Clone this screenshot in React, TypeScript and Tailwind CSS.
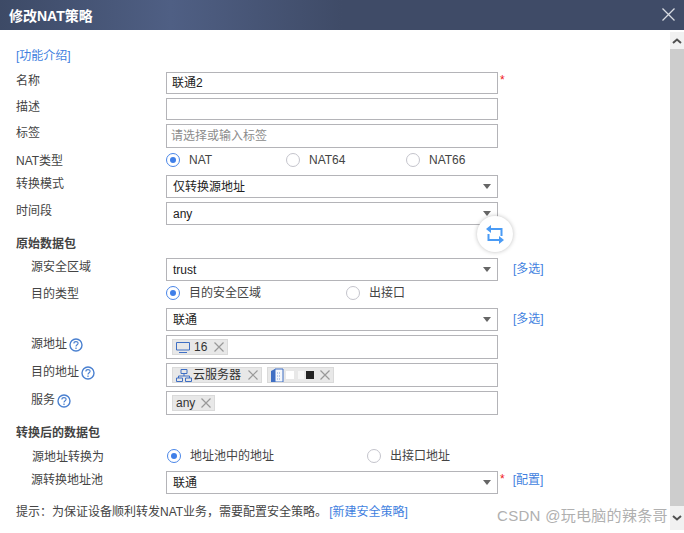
import type { ReactNode } from "react";

const box = "w-[332px] shrink-0 border border-[#b4b4b8] bg-white";

function Row({ label, className, children }: { label?: ReactNode; className: string; children?: ReactNode }) {
  return (
    <div className={`flex items-start ${className}`}>
      <div className="flex h-4 w-[150px] shrink-0 translate-y-px items-center text-[#444]">{label}</div>
      {children}
    </div>
  );
}

function Caret() {
  return <span className="absolute right-[6px] top-2 h-0 w-0 border-x-4 border-t-[5px] border-x-transparent border-t-[#666]" />;
}

function Select({ value }: { value: string }) {
  return (
    <div className={`relative flex h-full items-center pl-[6px] text-[#222] ${box}`}>
      {value}
      <Caret />
    </div>
  );
}

function Radio({ checked, text, className }: { checked?: boolean; text: string; className: string }) {
  return (
    <div className={`flex h-4 shrink-0 items-center ${className}`}>
      <span
        className={`flex h-[14px] w-[14px] shrink-0 items-center justify-center rounded-full border ${
          checked ? "border-[#4a86e8]" : "border-[#c4c4cc]"
        }`}
      >
        {checked && <span className="h-[6px] w-[6px] rounded-full bg-[#3f7fe8]" />}
      </span>
      <span className="ml-[9px] text-[#444]">{text}</span>
    </div>
  );
}

function Help() {
  return (
    <svg viewBox="0 0 14 14" className="ml-[2px] h-[14px] w-[14px] translate-y-px" fill="none" stroke="#4a80d0">
      <circle cx="7" cy="7" r="6" strokeWidth="1.4" />
      <path d="M4.9 5.4C4.9 3 9.1 3 9.1 5.3C9.1 6.8 7 6.8 7 8.6" strokeWidth="1.1" />
      <path d="M7 9.6V11" strokeWidth="1.2" />
    </svg>
  );
}

function Tag({ children, className }: { children: ReactNode; className: string }) {
  return (
    <div className={`flex h-4 shrink-0 items-center border border-[#dadada] bg-[#e8e8e8] text-[#333] ${className}`}>
      {children}
      <svg viewBox="0 0 10 10" className="absolute right-[3px] h-[10px] w-[10px]" fill="none" stroke="#999" strokeWidth="1.2">
        <path d="M0.5 0.5L9.5 9.5M9.5 0.5L0.5 9.5" />
      </svg>
    </div>
  );
}

function TagBox({ children }: { children: ReactNode }) {
  return <div className={`flex h-full items-center gap-[5px] pl-[5px] ${box}`}>{children}</div>;
}

function MultiLink({ text }: { text: string }) {
  return <a className="ml-[15px] flex h-full items-center pb-[2px] text-[#3f7fe0]">{text}</a>;
}

export default function App() {
  return (
    <div className="flex h-[533px] w-[684px] flex-col overflow-hidden bg-white text-[12px] font-['Liberation_Sans','Noto_Sans_CJK_SC',sans-serif] leading-4">
      <header className="flex h-[30px] shrink-0 items-center justify-between bg-[linear-gradient(90deg,#3d4a66_0%,#4f5f84_25%,#3f4b67_50%,#3f4b67_100%)] pl-[9px] pr-[9px]">
        <h1 className="translate-y-px text-[14px] font-bold text-white">修改NAT策略</h1>
        <svg viewBox="0 0 13 13" className="mb-[2px] h-[13px] w-[13px]" fill="none" stroke="#d8dbe2" strokeWidth="1.3">
          <path d="M0.5 0.5L12.5 12.5M12.5 0.5L0.5 12.5" />
        </svg>
      </header>

      <div className="flex min-h-0 flex-1">
        <main className="relative min-w-0 flex-1 pl-4 pt-[17px]">
          <a className="block h-4 translate-y-px text-[#3f7fe0]">[功能介绍]</a>

          <Row label="名称" className="mt-[9px] h-[22px]">
            <div className={`flex h-full items-center pl-[5px] text-[#222] ${box}`}>联通2</div>
            <span className="ml-[2px] text-[#f01818]">*</span>
          </Row>
          <Row label="描述" className="mt-1 h-[22px]">
            <div className={`h-full ${box}`} />
          </Row>
          <Row label="标签" className="mt-1 h-6">
            <div className={`flex h-full items-center pl-[4px] text-[#8c8c8c] ${box}`}>请选择或输入标签</div>
          </Row>
          <Row label="NAT类型" className="mt-1 h-4">
            <Radio checked text="NAT" className="w-[120px]" />
            <Radio text="NAT64" className="w-[120px]" />
            <Radio text="NAT66" className="" />
          </Row>
          <Row label="转换模式" className="mt-[7px] h-[23px]">
            <Select value="仅转换源地址" />
          </Row>
          <Row label="时间段" className="mt-1 h-[23px]">
            <Select value="any" />
          </Row>

          <div className="mt-[10px] h-4 translate-y-px font-bold text-[#444]">原始数据包</div>
          <Row label={<span className="pl-[15px]">源安全区域</span>} className="mt-[7px] h-[23px]">
            <Select value="trust" />
            <MultiLink text="[多选]" />
          </Row>
          <Row label={<span className="pl-[15px]">目的类型</span>} className="mt-1 h-4">
            <Radio checked text="目的安全区域" className="w-[180px]" />
            <Radio text="出接口" className="" />
          </Row>
          <Row className="mt-[7px] h-[23px]">
            <Select value="联通" />
            <MultiLink text="[多选]" />
          </Row>
          <Row
            label={
              <span className="flex items-center pl-[15px]">
                源地址
                <Help />
              </span>
            }
            className="mt-1 h-6"
          >
            <TagBox>
              <Tag className="relative w-[56px] pl-[3px]">
                <svg viewBox="0 0 14 12" className="mr-[4px] h-3 w-[14px]" fill="none" stroke="#3f6fc4" strokeWidth="1">
                  <path d="M0.5 1.5H13.5V9H0.5ZM3 11.5H11" />
                </svg>
                16
              </Tag>
            </TagBox>
          </Row>
          <Row
            label={
              <span className="flex items-center pl-[15px]">
                目的地址
                <Help />
              </span>
            }
            className="mt-1 h-6"
          >
            <TagBox>
              <Tag className="relative w-[90px] pl-[3px]">
                <svg viewBox="0 0 16 13" className="mr-[1px] h-[13px] w-4" fill="none" stroke="#3f6fc4" strokeWidth="1">
                  <path d="M5 0.5H11V4.5H5ZM8 4.5V7M2.5 9V7H13.5V9M0.5 9H6.5V12.5H0.5ZM9.5 9H15.5V12.5H9.5Z" />
                </svg>
                云服务器
              </Tag>
              <Tag className="relative w-[67px] pl-[3px]">
                <svg viewBox="0 0 13 14" className="h-[14px] w-[13px]">
                  <path d="M0 3L4 1V14H0Z" fill="#3f6fc4" />
                  <path d="M4 1H12V14H4Z" fill="#f4f7fc" stroke="#3f6fc4" strokeWidth="1" />
                  <path d="M6 5H10M6 8H10M6 11H10" stroke="#7f9fd8" strokeWidth="1" strokeDasharray="1 1" />
                </svg>
                <span className="ml-[2px] h-2 w-[8px] bg-white" />
                <span className="ml-[4px] h-2 w-[6px] bg-[#f6f6f6]" />
                <span className="ml-[2px] h-[8px] w-[8px] bg-[#222]" />
              </Tag>
            </TagBox>
          </Row>
          <Row
            label={
              <span className="flex items-center pl-[15px]">
                服务
                <Help />
              </span>
            }
            className="mt-1 h-6"
          >
            <TagBox>
              <Tag className="relative w-[43px] pl-[3px]">any</Tag>
            </TagBox>
          </Row>

          <div className="mt-[9px] h-4 translate-y-px font-bold text-[#444]">转换后的数据包</div>
          <Row label={<span className="pl-4">源地址转换为</span>} className="mt-2 h-4">
            <Radio checked text="地址池中的地址" className="ml-[1px] w-[200px]" />
            <Radio text="出接口地址" className="" />
          </Row>
          <Row label={<span className="pl-[15px]">源转换地址池</span>} className="mt-[7px] h-[23px]">
            <Select value="联通" />
            <span className="ml-[2px] text-[#f01818]">*</span>
            <a className="ml-[8px] translate-y-px text-[#3f7fe0]">[配置]</a>
          </Row>
          <p className="mt-[9px] h-4 translate-y-px text-[#444]">
            提示：为保证设备顺利转发NAT业务，需要配置安全策略。<a className="ml-[2px] text-[#3f7fe0]">[新建安全策略]</a>
          </p>

          <button className="absolute left-[477px] top-[186px] flex h-9 w-9 items-center justify-center rounded-full bg-white shadow-[0_0_4px_rgba(0,0,0,0.25)]">
            <svg viewBox="0 0 18 19" className="h-[19px] w-[18px]" fill="none" stroke="#4a9bf5" strokeWidth="2">
              <path d="M4 4H15.5V11M2.5 9V15H14" />
              <path d="M0 4L5 0V8ZM18 15L13 11V19Z" fill="#4a9bf5" stroke="none" />
            </svg>
          </button>

          <span className="absolute left-[497px] top-[476px] text-[15px] leading-5 tracking-[0.3px] text-[#b0b0b0]">CSDN @玩电脑的辣条哥</span>
        </main>

        <aside className="mb-[3px] mt-[2px] flex w-[14px] shrink-0 flex-col">
          <div className="flex h-[17px] items-center justify-center bg-[#f1f1f1]">
            <svg viewBox="0 0 10 6" className="h-[6px] w-[10px]" fill="none" stroke="#505050" strokeWidth="2">
              <path d="M1 5L5 1.5L9 5" />
            </svg>
          </div>
          <div className="flex-1 bg-[#cdcdcd]" />
          <div className="flex h-6 items-center justify-center bg-[#f1f1f1]">
            <svg viewBox="0 0 10 6" className="h-[6px] w-[10px]" fill="none" stroke="#505050" strokeWidth="2">
              <path d="M1 1L5 4.5L9 1" />
            </svg>
          </div>
        </aside>
      </div>
    </div>
  );
}
